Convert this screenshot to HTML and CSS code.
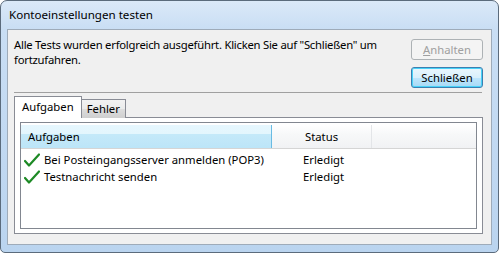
FILE: index.html
```html
<!DOCTYPE html>
<html>
<head>
<meta charset="utf-8">
<link rel="stylesheet" href="styles.css">
</head>
<body>
<div class="window">
  <div class="titlebar">Kontoeinstellungen testen</div>
  <div class="client">
    <div class="top">
      <div class="message">Alle Tests wurden erfolgreich ausgeführt. Klicken Sie auf "Schließen" um fortzufahren.</div>
      <div class="buttons">
        <div class="btn disabled"><u>A</u>nhalten</div>
        <div class="btn default">Schließen</div>
      </div>
    </div>
    <div class="sep"></div>
    <div class="tabs">
      <div class="tab active">Aufgaben</div>
      <div class="tab">Fehler</div>
    </div>
    <div class="panel">
      <div class="list">
        <div class="header">
          <div class="hcol c1 hot">Aufgaben</div>
          <div class="hcol c2">Status</div>
          <div class="hcol c3"></div>
        </div>
        <div class="row">
          <div class="cell c1"><svg class="check" width="16" height="14" viewBox="0 0 16 14"><path d="M1 8 L5 12.5 L15 1.5" fill="none" stroke="#1d8a25" stroke-width="2.2" stroke-linecap="round" stroke-linejoin="round"/></svg>Bei Posteingangsserver anmelden (POP3)</div>
          <div class="cell c2">Erledigt</div>
        </div>
        <div class="row">
          <div class="cell c1"><svg class="check" width="16" height="14" viewBox="0 0 16 14"><path d="M1 8 L5 12.5 L15 1.5" fill="none" stroke="#1d8a25" stroke-width="2.2" stroke-linecap="round" stroke-linejoin="round"/></svg>Testnachricht senden</div>
          <div class="cell c2">Erledigt</div>
        </div>
      </div>
    </div>
  </div>
</div>
</body>
</html>
```

FILE: styles.css
```css
html, body {
  margin: 0;
  padding: 0;
  background: #ffffff;
}
body {
  font-family: "Segoe UI", "Noto Sans", "Open Sans", sans-serif;
  font-size: 11.3px;
  color: #000;
}
.window {
  width: 499px;
  height: 253px;
  box-sizing: border-box;
  border: 1px solid #5b6b7c;
  border-radius: 7px 7px 5px 5px;
  background: linear-gradient(180deg, #dbe9f8 0px, #c9def4 28px, #bad4ef 100%);
  padding: 0 6px 7px 6px;
  display: flex;
  flex-direction: column;
}
.titlebar {
  height: 28px;
  line-height: 28px;
  padding-left: 2px;
  flex: none;
  font-size: 11.6px;
}
.client {
  flex: 1;
  background: #f0f0f0;
  border: 1px solid #9eabb9;
  display: flex;
  flex-direction: column;
}
.top {
  display: flex;
  height: 62px;
  padding: 7px 8px 0 6px;
  box-sizing: border-box;
}
.message {
  flex: 1;
  line-height: 15px;
  padding-right: 8px;
  letter-spacing: -0.25px;
}
.buttons {
  display: flex;
  flex-direction: column;
  gap: 7px;
  padding-top: 2px;
}
.btn {
  width: 72px;
  height: 21px;
  box-sizing: border-box;
  border: 1px solid #707070;
  border-radius: 3px;
  text-align: center;
  line-height: 19px;
  background: linear-gradient(180deg, #f2f2f2 0%, #ebebeb 50%, #dddddd 51%, #cfcfcf 100%);
}
.btn.disabled {
  color: #a0a0a0;
  border-color: #adb2b5;
  background: #f4f4f4;
}
.btn.disabled u {
  text-decoration-color: #a0a0a0;
}
.btn.default {
  border-color: #3c7fb1;
  background: linear-gradient(180deg, #eaf6fd 0%, #d9f0fc 50%, #bee6fd 51%, #a7d9f5 100%);
  box-shadow: inset 0 0 0 1px #48d2f8;
}
.sep {
  height: 1px;
  background: #a0a0a0;
  margin: 0 9px 0 6px;
  flex: none;
}
.tabs {
  display: flex;
  align-items: flex-end;
  margin: 4px 0 0 6px;
  height: 21px;
  flex: none;
  position: relative;
  z-index: 1;
}
.tab {
  height: 18px;
  line-height: 18px;
  padding: 0 5px;
  border: 1px solid #898c95;
  border-bottom: none;
  background: linear-gradient(180deg, #f2f2f2 0%, #ebebeb 50%, #dddddd 51%, #cfcfcf 100%);
  margin-left: -1px;
}
.tab.active {
  background: #ffffff;
  padding: 0 7px;
  margin-left: 0;
  position: relative;
  z-index: 2;
  height: 21px;
  line-height: 20px;
}
.panel {
  margin: -1px 8px 10px 6px;
  border: 1px solid #898c95;
  background: #ffffff;
  flex: 1;
  padding: 4px 5px;
  display: flex;
}
.list {
  flex: 1;
  border: 1px solid #828790;
  background: #ffffff;
}
.header {
  display: flex;
  height: 23px;
  margin-top: 2px;
  border-bottom: 1px solid #d5d5d5;
  background: linear-gradient(180deg, #ffffff 0%, #f7f8f9 40%, #f1f2f4 100%);
}
.hcol {
  line-height: 23px;
  box-sizing: border-box;
  border-right: 1px solid #e3e5e8;
}
.hcol.c1 {
  width: 251px;
  padding-left: 7px;
}
.hcol.hot {
  background: linear-gradient(180deg, #e6f7fe 0%, #e3f6fd 40%, #c4e9f9 41%, #bce5f8 100%);
  border-right: 1px solid #69bbe3;
}
.hcol.c2 {
  width: 100px;
  text-align: center;
}
.hcol.c3 {
  flex: 1;
  border-right: none;
}
.row {
  display: flex;
  height: 17px;
  line-height: 17px;
  white-space: nowrap;
}
.header + .row {
  margin-top: 2px;
}
.cell.c1 {
  width: 251px;
  display: flex;
  align-items: center;
  padding-left: 3px;
  box-sizing: border-box;
}
.check {
  margin-right: 4px;
  flex: none;
}
.cell.c2 {
  width: 100px;
  padding-left: 31px;
  box-sizing: border-box;
}
```
